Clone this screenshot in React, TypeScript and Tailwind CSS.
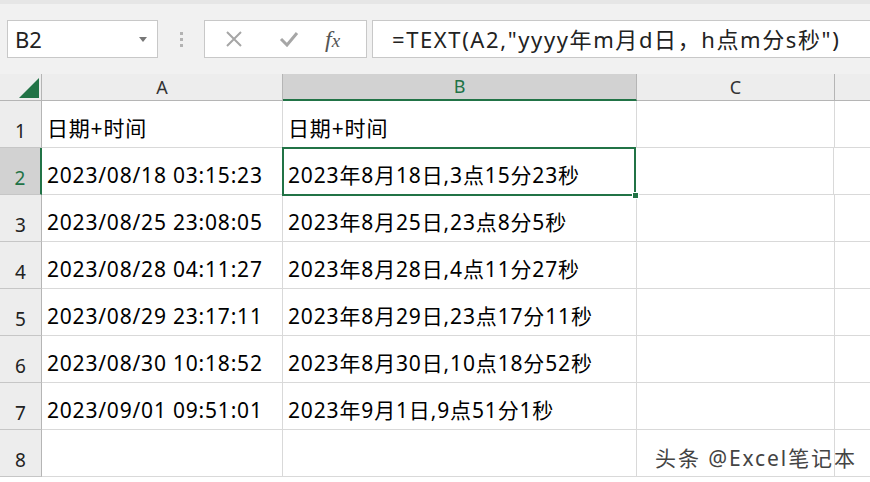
const FONT = { fontFamily: '"Noto Sans", "Noto Sans CJK SC", sans-serif' };

const ROWS: [string, string][] = [
  ["日期+时间", "日期+时间"],
  ["2023/08/18 03:15:23", "2023年8月18日,3点15分23秒"],
  ["2023/08/25 23:08:05", "2023年8月25日,23点8分5秒"],
  ["2023/08/28 04:11:27", "2023年8月28日,4点11分27秒"],
  ["2023/08/29 23:17:11", "2023年8月29日,23点17分11秒"],
  ["2023/08/30 10:18:52", "2023年8月30日,10点18分52秒"],
  ["2023/09/01 09:51:01", "2023年9月1日,9点51分1秒"],
  ["", ""],
];

function Toolbar() {
  return (
    <div className="h-[74px] bg-[#f1f1f1] border-t-4 border-[#e6e6e6] flex items-start pt-[16px] pl-[7px]">
      <div className="w-[151px] h-[38px] bg-white border border-[#c8c8c8] flex items-center justify-between pl-[7px] pr-[10px]">
        <span className="text-[22px] text-[#222]">B2</span>
        <svg width="8" height="5" viewBox="0 0 8 5"><path d="M0 0h8L4 5z" fill="#777" /></svg>
      </div>
      <div className="w-[46px] h-[38px] flex flex-col items-center justify-center gap-[3px]">
        <span className="w-[3px] h-[3px] bg-[#b3b3b3]" />
        <span className="w-[3px] h-[3px] bg-[#b3b3b3]" />
        <span className="w-[3px] h-[3px] bg-[#b3b3b3]" />
      </div>
      <div className="w-[163px] h-[38px] bg-white border border-[#c8c8c8] flex items-center">
        <svg className="ml-[20px]" width="18" height="18" viewBox="0 0 18 18">
          <path d="M2 2L16 16M16 2L2 16" stroke="#a6a6a6" strokeWidth="2" />
        </svg>
        <svg className="ml-[36px]" width="20" height="16" viewBox="0 0 20 16">
          <path d="M2 8L8 14L18 2" stroke="#a6a6a6" strokeWidth="3" fill="none" />
        </svg>
        <span className="ml-[26px] text-[24px] italic text-[#555] leading-none" style={{ fontFamily: '"Liberation Serif", serif' }}>
          f<span className="text-[19px]">x</span>
        </span>
      </div>
      <div className="ml-[5px] flex-1 h-[38px] bg-white border border-[#c8c8c8] border-r-0 flex items-center pl-[19px]">
        <span className="text-[22px] tracking-[1.6px] text-[#222] whitespace-nowrap">=TEXT(A2,"yyyy年m月d日，h点m分s秒")</span>
      </div>
    </div>
  );
}

function Header() {
  return (
    <div className="flex h-[27px] bg-[#ededed]">
      <div className="w-[42px] h-full border-r border-b border-[#b5b5b5] flex items-end justify-end pr-[2px] pb-[2px]">
        <svg width="20" height="20" viewBox="0 0 20 20"><path d="M20 0V20H0z" fill="#217346" /></svg>
      </div>
      <div className="w-[241px] border-r border-b border-[#b5b5b5] flex items-center justify-center text-[18px] text-[#333]">A</div>
      <div className="w-[354px] bg-[#d2d2d2] border-r border-b-2 border-b-[#217346] border-r-[#b5b5b5] flex items-center justify-center text-[18px] text-[#217346]">B</div>
      <div className="w-[198px] border-r border-b border-[#b5b5b5] flex items-center justify-center text-[18px] text-[#333]">C</div>
      <div className="flex-1 border-b border-[#b5b5b5]" />
    </div>
  );
}

export default function App() {
  return (
    <div className="w-[870px] h-[482px] overflow-hidden bg-white relative" style={FONT}>
      <Toolbar />
      <Header />
      {ROWS.map(([a, b], i) => {
        const sel = i === 1;
        return (
          <div key={i} className="flex h-[47px]">
            <div
              className={
                sel
                  ? "w-[42px] bg-[#d2d2d2] border-r-2 border-r-[#217346] border-b border-b-[#c6c6c6] flex items-end justify-center pb-[2px] text-[19px] text-[#217346]"
                  : "w-[42px] bg-[#ededed] border-r border-r-[#b5b5b5] border-b border-b-[#c6c6c6] flex items-end justify-center pb-[2px] text-[19px] text-[#222]"
              }
            >
              {i + 1}
            </div>
            <div className="w-[241px] border-r border-b border-[#d9d9d9] flex items-end pl-[5px] pb-[3px] text-[21px] tracking-[0.8px] text-black whitespace-nowrap">
              {a}
            </div>
            <div
              className={
                sel
                  ? "w-[354px] relative -mt-px -ml-px h-[49px] border-2 border-[#217346] flex items-end pl-[4px] pb-[3px] text-[21px] tracking-[0.85px] text-black whitespace-nowrap z-10"
                  : "w-[354px] border-r border-b border-[#d9d9d9] flex items-end pl-[5px] pb-[3px] text-[21px] tracking-[0.85px] text-black whitespace-nowrap"
              }
            >
              {b}
              {sel && <span className="absolute -right-[5px] -bottom-[5px] w-[7px] h-[7px] bg-[#217346] border border-white" />}
            </div>
            <div className="w-[198px] border-r border-b border-[#d9d9d9]" />
            <div className="flex-1 border-b border-[#d9d9d9]" />
          </div>
        );
      })}
      <div className="absolute left-[655px] top-[443px] text-[21px] tracking-[1.9px] text-[#444] whitespace-nowrap" style={{ textShadow: "0 0 2px #fff, 0 0 2px #fff" }}>
        头条 @Excel笔记本
      </div>
    </div>
  );
}
